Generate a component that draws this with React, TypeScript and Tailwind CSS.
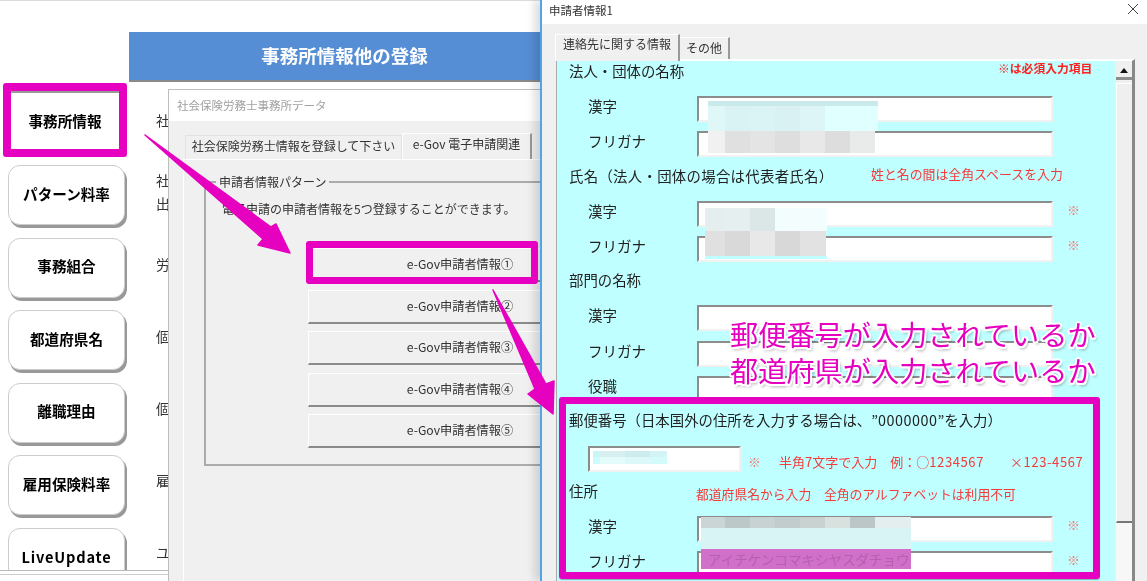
import React from "react";

const sideItems = ["パターン料率", "事務組合", "都道府県名", "離職理由", "雇用保険料率"];

function SideBtn({ label, wide }: { label: string; wide?: boolean }) {
  return (
    <div
      className={
        wide
          ? "w-[117px] h-[60px] shrink-0 ml-[8px] bg-white rounded-[12px] border border-[#ccc] shadow-[2px_3px_0_#999] flex items-center justify-center text-[14.6px] font-bold text-black pb-[3px] tracking-[0.8px]"
          : "w-[117px] h-[60px] shrink-0 ml-[8px] bg-white rounded-[12px] border border-[#ccc] shadow-[2px_3px_0_#999] flex items-center justify-center text-[14.6px] font-bold text-black pb-[3px]"
      }
    >
      {label}
    </div>
  );
}

function Sidebar() {
  return (
    <div className="w-[129px] shrink-0 pt-[82px] flex flex-col">
      <div className="ml-[3px] w-[124px] h-[74px] border-[8px] border-[#e600bf] rounded-[3px] mb-[8px] shrink-0">
        <div className="w-full h-full bg-white border-t-2 border-t-[#999] flex items-center justify-center text-[14.6px] font-bold text-black pb-[1px]">事務所情報</div>
      </div>
      <div className="flex flex-col gap-[12.6px]">
        {sideItems.map((s) => (
          <SideBtn key={s} label={s} />
        ))}
        <SideBtn label="LiveUpdate" wide />
      </div>
    </div>
  );
}

function MainBack() {
  return (
    <div className="flex-1 pt-[31px] min-w-0">
      <div className="w-[431px] h-[48px] bg-[#558ed5] shadow-[0_2px_0_#8a8a8a] flex items-center justify-center text-white font-bold text-[18.5px]">
        事務所情報他の登録
      </div>
      <div className="pl-[27px] pt-[30px] text-[14px] text-[#333] leading-[20px] flex flex-col">
        <div>社</div>
        <div className="mt-[40px]">社</div>
        <div className="mt-[3px]">出</div>
        <div className="mt-[41px]">労</div>
        <div className="mt-[52px]">個</div>
        <div className="mt-[52px]">個</div>
        <div className="mt-[52px]">雇</div>
        <div className="mt-[52px]">ユ</div>
      </div>
    </div>
  );
}

const egovButtons = ["e-Gov申請者情報①", "e-Gov申請者情報②", "e-Gov申請者情報③", "e-Gov申請者情報④", "e-Gov申請者情報⑤"];

function DataDialog() {
  return (
    <div className="absolute left-[168px] top-[89px] w-[460px] h-[492px] bg-[#f0f0f0] border-l border-t border-[#bdbdbd] flex flex-col text-[#333]">
      <div className="h-[31px] bg-white flex items-center pl-[8px] text-[11.5px] text-[#a0a0a0] shrink-0">社会保険労務士事務所データ</div>
      <div className="h-[38px] flex items-end pl-[16px] shrink-0">
        <div className="w-[217px] h-[24px] border border-[#e2e2e2] border-b-0 flex items-center justify-center text-[12px] pb-[3px]">社会保険労務士情報を登録して下さい</div>
        <div className="w-[130px] h-[26px] bg-[#f0f0f0] border-t border-l border-white border-r-2 border-r-[#999] flex items-center justify-center text-[12px] pb-[6px]">e-Gov 電子申請関連</div>
      </div>
      <div className="ml-[14px] flex-1 border-l border-t border-white pl-[20px] pt-[14px]">
        <fieldset className="w-[420px] h-[292px] border-2 border-[#ababab]">
          <legend className="ml-[10px] px-[3px] text-[12px] leading-[16px]">申請者情報パターン</legend>
          <div className="ml-[16px] mt-[10px] text-[12px] leading-[18px] whitespace-nowrap">電子申請の申請者情報を5つ登録することができます。</div>
          <div className="ml-[102px] mt-[30px] flex flex-col gap-[7.5px]">
            {egovButtons.map((b) => (
              <div key={b} className="w-[306px] h-[34px] border-t border-l border-white border-b-2 border-b-[#8a8a8a] flex items-center justify-center text-[12.2px] pr-[3px]">{b}</div>
            ))}
          </div>
        </fieldset>
      </div>
    </div>
  );
}

function Input({ w = "w-[356px]" }: { w?: string }) {
  return <div className={`${w} h-[26px] shrink-0 bg-white border-t-2 border-l-2 border-t-[#8c8c8c] border-l-[#8c8c8c] border-b-2 border-r-2 border-b-[#f1f1f1] border-r-[#f1f1f1]`} />;
}

function Field({ label, mt, mark }: { label: string; mt: string; mark?: boolean }) {
  return (
    <div className={`flex items-center pl-[31px] ${mt}`}>
      <div className="w-[109px] text-[14.5px] -mt-[6px]">{label}</div>
      <Input />
      {mark && <span className="ml-[14px] text-[13px] text-[#f47f7f] -mt-[8px]">※</span>}
    </div>
  );
}

function Heading({ text, mt, w, children }: { text: React.ReactNode; mt: string; w?: string; children?: React.ReactNode }) {
  return (
    <div className={`h-[24px] pl-[12px] flex items-center text-[14.4px] whitespace-nowrap ${mt}`}>
      <div className={w}>{text}</div>
      {children}
    </div>
  );
}

function ApplicantDialog() {
  return (
    <div className="absolute left-[540px] top-0 w-[607px] h-[581px] bg-[#f0f0f0] border-l-2 border-[#4ea5ea] shadow-[-6px_0_8px_rgba(0,0,0,0.13)] flex flex-col text-[#222]">
      <div className="h-[24px] bg-white flex items-center justify-between pl-[7px] pr-[9px] text-[11.5px] text-[#333] shrink-0">
        <span className="-mt-[3px]">申請者情報1</span>
        <svg width="10" height="10" viewBox="0 0 10 10" className="stroke-[#444] -mt-[6px]"><path d="M0 0L10 10M10 0L0 10" strokeWidth="1" /></svg>
      </div>
      <div className="h-[35px] pt-[10px] pl-[13px] flex items-start shrink-0 text-[12px] text-[#333]">
        <div className="w-[125px] h-[27px] bg-[#f0f0f0] border-t border-l border-white border-r-2 border-r-[#999] flex items-center justify-center pb-[8px] shrink-0 relative">連絡先に関する情報</div>
        <div className="w-[50px] h-[24px] mt-[3px] border-t border-white border-r-2 border-r-[#999] flex items-center justify-center pb-[4px] shrink-0">その他</div>
      </div>
      <div className="ml-[14px] w-[579px] flex-1 border-l border-[#aaa] border-t-2 border-t-white border-r-[3px] border-r-[#888] flex min-h-0">
        <div className="w-[558px] bg-[#bfffff] shrink-0">
          <Heading text="法人・団体の名称" mt="-mt-[2px]" w="w-[429px]">
            <span className="text-[11.8px] font-bold text-[#ff2020] -mt-[6px]">※は必須入力項目</span>
          </Heading>
          <Field label="漢字" mt="mt-[13px]" />
          <Field label="フリガナ" mt="mt-[9px]" />
          <Heading text={<span className="tracking-[0.3px]">氏名（法人・団体の場合は代表者氏名）</span>} mt="mt-[7px]" w="w-[302px]">
            <span className="text-[12.9px] text-[#f53a3a] -mt-[4px]">姓と名の間は全角スペースを入力</span>
          </Heading>
          <Field label="漢字" mt="mt-[13px]" mark />
          <Field label="フリガナ" mt="mt-[9px]" mark />
          <Heading text="部門の名称" mt="mt-[6px]" />
          <Field label="漢字" mt="mt-[13px]" />
          <Field label="フリガナ" mt="mt-[10px]" />
          <Field label="役職" mt="mt-[9px]" />
          <Heading text={<>郵便番号（日本国外の住所を入力する場合は、”<span className="tracking-[0.5px]">0000000</span>”を入力）</>} mt="mt-[6px]" />
          <div className="flex items-center pl-[31px] mt-[14px] whitespace-nowrap text-[13px] text-[#f53a3a]">
            <Input w="w-[153px]" />
            <span className="ml-[7px] text-[#f47f7f] mt-[6px]">※</span>
            <span className="ml-[18px] mt-[6px]">半角7文字で入力</span>
            <span className="ml-[13px] mt-[6px]">例：○<span className="tracking-[0.6px]">1234567</span></span>
            <span className="ml-[26px] mt-[6px] tracking-[0.6px]">×123-4567</span>
          </div>
          <Heading text="住所" mt="mt-[7px]" w="w-[127px]">
            <span className="text-[12.8px] text-[#f53a3a] mt-[5px]">都道府県名から入力　全角のアルファベットは利用不可</span>
          </Heading>
          <Field label="漢字" mt="mt-[13px]" mark />
          <Field label="フリガナ" mt="mt-[9px]" mark />
        </div>
        <div className="flex-1 flex flex-col pt-[2px] pl-px">
          <div className="h-[17px] border-b-[3px] border-[#8c8c8c] flex items-center justify-center bg-[#f0f0f0] shrink-0">
            <svg width="8" height="5" viewBox="0 0 8 5"><path d="M4 0L8 5H0Z" fill="#111" /></svg>
          </div>
          <div className="h-[440px] mt-[3px] bg-[#efefef] border-l border-t border-white border-b-2 border-b-[#777] shrink-0" />
          <div className="flex-1 bg-[#f7f7f7]" />
        </div>
      </div>
    </div>
  );
}

function Overlays() {
  return (
    <>
      {/* blurred-out values */}
      <div className="absolute left-[708px] top-[101px] w-[170px]">
        <div className="h-[5px] bg-[#c9e9ea]" />
        <div className="h-[25px] grid grid-cols-[17px_25px_25px_25px_25px_53px]">
          <div className="bg-[#e0f7f8]" /><div className="bg-[#d9f2f3]" /><div className="bg-[#daf3f4]" /><div className="bg-[#d9f1f3]" /><div className="bg-[#ddf5f6]" /><div className="bg-[#e0ffff]" />
        </div>
        <div className="h-[22px] w-[167px] grid grid-cols-[17px_25px_25px_25px_25px_25px_25px]">
          <div className="bg-[#f1f1f1]" /><div className="bg-[#e0e0e0]" /><div className="bg-[#e4e4e4]" /><div className="bg-[#dedede]" /><div className="bg-[#e8e8e8]" /><div className="bg-[#dddddd]" /><div className="bg-[#e9ebeb]" />
        </div>
      </div>
      <div className="absolute left-[705px] top-[208px] w-[122px]">
        <div className="h-[23px] grid grid-cols-[20px_25px_25px_25px_27px]">
          <div className="bg-[#e4eeef]" /><div className="bg-[#e6eff0]" /><div className="bg-[#dbe6e7]" /><div className="bg-[#f4fdfe]" /><div className="bg-[#f4fdfe]" />
        </div>
        <div className="h-[25px] w-[121px] grid grid-cols-[20px_25px_25px_25px_26px]">
          <div className="bg-[#e0e0e0]" /><div className="bg-[#d9d9d9]" /><div className="bg-[#e8e8e8]" /><div className="bg-[#d8d8d8]" /><div className="bg-[#e2e2e2]" />
        </div>
        <div className="h-[3px] bg-[#bfffff]" />
      </div>
      <div className="absolute left-[593px] top-[451px] w-[74px]">
        <div className="h-[6px] grid grid-cols-[7px_25px_25px_17px]">
          <div className="bg-[#c8f6f8]" /><div className="bg-[#d8eff0]" /><div className="bg-[#ccecee]" /><div className="bg-[#d4f3f4]" />
        </div>
        <div className="h-[7px] grid grid-cols-[7px_25px_25px_17px]">
          <div className="bg-[#ccfcfd]" /><div className="bg-[#e4fbfc]" /><div className="bg-[#dcf8f9]" /><div className="bg-[#d4fbfc]" />
        </div>
      </div>
      <div className="absolute left-[701px] top-[517px] w-[210px] h-[52px] flex flex-col">
        <div className="h-[14px] grid grid-cols-[24px_25px_25px_25px_25px_25px_25px_36px]">
          <div className="bg-[#cbd5d5]" /><div className="bg-[#bcc8c8]" /><div className="bg-[#c8d2d2]" /><div className="bg-[#c2cccc]" /><div className="bg-[#c9d2d1]" /><div className="bg-[#d9e1df]" /><div className="bg-[#bcc6c7]" /><div className="bg-[#e5eeef]" />
        </div>
        <div className="h-[25px] bg-[#d9f4f5]" />
        <div className="flex-1 bg-[#d070c8] flex items-center pl-[7px] text-[13.5px] text-[#b65fae] whitespace-nowrap">アイチケンコマキシヤスダチョウ</div>
      </div>

      {/* annotation frames */}
      <div className="absolute left-[306px] top-[241px] w-[232px] h-[43px] border-[7px] border-[#e600bf] rounded-[3px]" />
      <div className="absolute left-[559px] top-[397px] w-[541px] h-[182px] border-[7px] border-[#e600bf] rounded-[3px] shadow-[0_1px_1px_rgba(0,0,0,0.3)]" />

      {/* arrows */}
      <svg className="absolute left-0 top-0" width="1147" height="581" viewBox="0 0 1147 581" fill="#e600bf" stroke="#e600bf" strokeLinejoin="round" strokeWidth="1.5">
        <path d="M145 135L271 227L276 224L290 253L258 245L263 239Z" />
        <path d="M493 290L546 384L554 381L553 414L528 394L535 389Z" />
      </svg>

      {/* callout */}
      <div className="absolute left-[730px] top-[316px] text-[28.2px] leading-[36px] text-[#e600bf] whitespace-nowrap [text-shadow:-2px_0_0_#fff,2px_0_0_#fff,0_-2px_0_#fff,0_2px_0_#fff,-1.5px_-1.5px_0_#fff,1.5px_-1.5px_0_#fff,-1.5px_1.5px_0_#fff,1.5px_1.5px_0_#fff,2px_3px_3px_rgba(0,0,0,0.35)]">
        <div>郵便番号が入力されているか</div>
        <div>都道府県が入力されているか</div>
      </div>
    </>
  );
}

export default function App() {
  return (
    <div className="relative w-[1147px] h-[581px] overflow-hidden bg-white [font-family:'Noto_Sans_CJK_JP','Noto_Sans',sans-serif] [text-spacing-trim:space-all] blur-[0.35px]">
      <div className="h-[571px] border-t border-[#dcdcdc] border-b border-b-[#bbb] flex overflow-hidden">
        <Sidebar />
        <MainBack />
      </div>
      <div className="mt-[3px] border-t border-[#ccc]" />
      <DataDialog />
      <ApplicantDialog />
      <Overlays />
    </div>
  );
}
